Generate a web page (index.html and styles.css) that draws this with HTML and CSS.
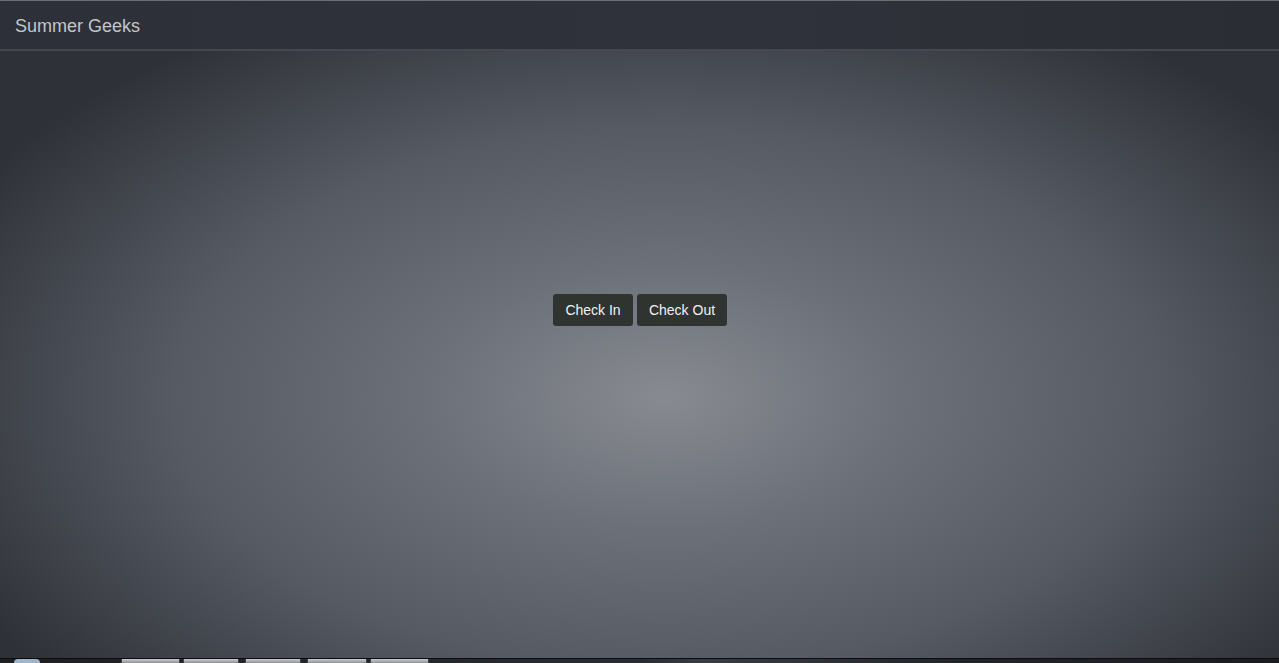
FILE: index.html
```html
<!DOCTYPE html>
<html>
<head>
<meta charset="utf-8">
<link rel="stylesheet" href="styles.css">
</head>
<body>
<div class="page">
  <header class="navbar">
    <span class="brand">Summer Geeks</span>
  </header>
  <main class="stage">
    <div class="actions">
      <button class="btn btn-in">Check In</button>
      <button class="btn btn-out">Check Out</button>
    </div>
  </main>
  <footer class="taskbar">
    <span class="orb"></span>
    <span class="task t1"></span>
    <span class="task t2"></span>
    <span class="task t3"></span>
    <span class="task t4"></span>
    <span class="task t5"></span>
  </footer>
</div>
</body>
</html>
```

FILE: styles.css
```css
html, body {
  margin: 0;
  padding: 0;
  height: 663px;
  overflow: hidden;
  background: #2c2f36;
  font-family: "Liberation Sans", Arial, sans-serif;
}
.page {
  display: flex;
  flex-direction: column;
  height: 663px;
}
.navbar {
  height: 48px;
  border-top: 1px solid #6b6e75;
  border-bottom: 2px solid #454850;
  background: linear-gradient(90deg, #2d3038 0%, #2f323a 60%, #2a2d33 100%);
  display: flex;
  align-items: center;
  padding-left: 16px;
  flex-shrink: 0;
}
.brand {
  color: #c4c5c8;
  font-size: 18px;
  margin-top: 2px;
  margin-left: -1px;
}
.stage {
  flex: 1;
  background:
    radial-gradient(ellipse 62% 72% at 52% 57%, #878a91 0%, #6c7078 30%, #565a62 62%, #2e3138 100%);
  display: flex;
  justify-content: center;
  padding-top: 243px;
  box-sizing: border-box;
}
.actions {
  display: flex;
  gap: 4px;
  height: 32px;
  margin-left: 1px;
}
.btn {
  height: 32px;
  border: none;
  border-radius: 3px;
  background: #2f3430;
  color: #f2f2f2;
  font-family: "Liberation Sans", Arial, sans-serif;
  font-size: 14px;
  padding: 0;
  cursor: pointer;
}
.btn-in { width: 80px; }
.btn-out { width: 90px; }
.taskbar {
  height: 4px;
  border-top: 1px solid #0c0d0f;
  background: linear-gradient(90deg, #1d1f22 0%, #2a2c2f 50%, #3a3c3f 55%, #222428 75%, #1b1c1f 100%);
  display: flex;
  flex-shrink: 0;
}
.orb {
  width: 26px;
  height: 4px;
  margin-left: 14px;
  border-radius: 13px 13px 0 0;
  background: #9fb4c8;
}
.task {
  height: 4px;
  background: linear-gradient(180deg, #c9cbcd, #8f9194);
  border-left: 1px solid #444;
  border-right: 1px solid #444;
}
.t1 { margin-left: 81px; width: 57px; }
.t2 { margin-left: 3px; width: 54px; }
.t3 { margin-left: 6px; width: 54px; }
.t4 { margin-left: 6px; width: 58px; }
.t5 { margin-left: 3px; width: 57px; }
```
